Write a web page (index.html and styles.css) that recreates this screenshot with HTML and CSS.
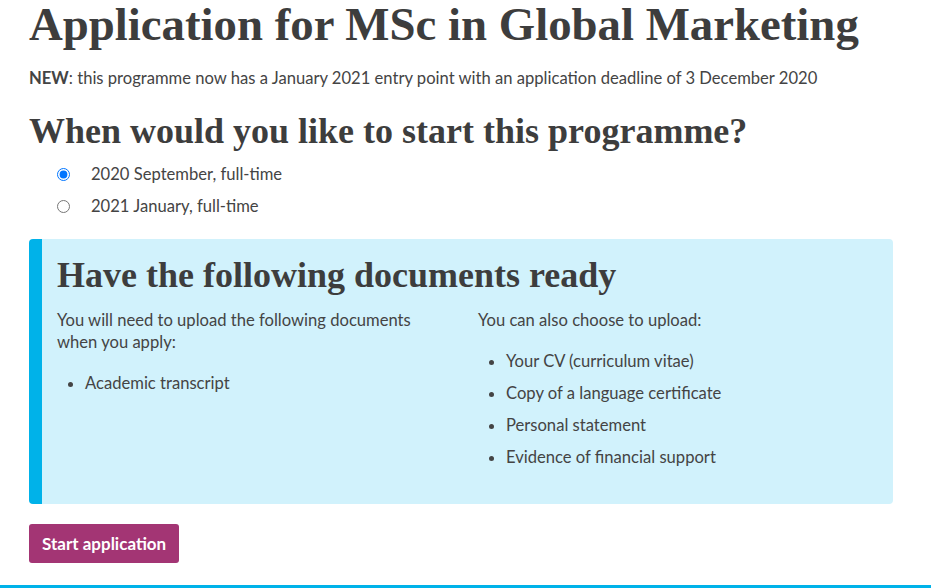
FILE: index.html
```html
<!DOCTYPE html>
<html lang="en">
<head>
    <meta charset="UTF-8">
    <meta name="viewport" content="width=device-width, initial-scale=1.0">
    <title>Application for MSc in Global Marketing</title>
    <link rel="stylesheet" href="styles.css">
</head>
<body>

    <div class="page">
        <h1 class="title">Application for MSc in Global Marketing</h1>
        <p class="notice"><strong>NEW</strong>: this programme now has a January 2021 entry point with an application deadline of 3 December 2020</p>

        <h2 class="question">When would you like to start this programme?</h2>
        <div class="choices">
            <label class="choice"><input type="radio" name="start" checked> <span>2020 September, full-time</span></label>
            <label class="choice"><input type="radio" name="start"> <span>2021 January, full-time</span></label>
        </div>

        <div class="docs">
            <h2 class="docs-title">Have the following documents ready</h2>
            <div class="docs-cols">
                <div class="docs-col">
                    <p>You will need to upload the following documents when you apply:</p>
                    <ul>
                        <li>Academic transcript</li>
                    </ul>
                </div>
                <div class="docs-col">
                    <p>You can also choose to upload:</p>
                    <ul>
                        <li>Your CV (curriculum vitae)</li>
                        <li>Copy of a language certificate</li>
                        <li>Personal statement</li>
                        <li>Evidence of financial support</li>
                    </ul>
                </div>
            </div>
        </div>

        <button class="start-btn">Start application</button>
    </div>
    <div class="footer-line"></div>

</body>
</html>
```

FILE: styles.css
```css
body {
    margin: 0;
    font-family: Lato, "Open Sans", sans-serif;
    font-size: 16.6px;
    color: #444;
    background: #fff;
    overflow: hidden;
}

.page {
    padding: 0 38px 0 29px;
    height: 585px;
    overflow: hidden;
}

.title {
    font-family: "Liberation Serif", serif;
    font-size: 46.8px;
    font-weight: bold;
    line-height: 48px;
    margin: 0;
    color: #3d3d3d;
}

.notice {
    margin: 19px 0 0;
    line-height: 22px;
}

.notice strong {
    font-weight: bold;
}

.question {
    font-family: "Liberation Serif", serif;
    font-size: 36px;
    font-weight: bold;
    line-height: 40px;
    margin: 22px 0 0;
    color: #3d3d3d;
}

.choices {
    margin-top: 7px;
    padding-left: 28px;
}

.choice {
    display: flex;
    align-items: center;
    height: 32px;
}

.choice input {
    margin: 0 21px 0 0;
    width: 13px;
    height: 13px;
}

.docs {
    margin-top: 17px;
    background-color: #d1f2fc;
    border-left: 13px solid #00b2e9;
    border-radius: 4px;
    padding: 13px 30px 26px 15px;
}

.docs-title {
    font-family: "Liberation Serif", serif;
    font-size: 36px;
    font-weight: bold;
    line-height: 46px;
    margin: 0;
    color: #3d3d3d;
}

.docs-cols {
    display: grid;
    grid-template-columns: 1fr 1fr;
    gap: 36px;
    margin-top: 11px;
}

.docs-col p {
    margin: 0;
    line-height: 22px;
}

.docs-col ul {
    margin: 19px 0 0;
    padding-left: 28px;
}

.docs-col li {
    line-height: 22px;
    margin-bottom: 10px;
}

.start-btn {
    margin-top: 20px;
    font-family: Lato, "Open Sans", sans-serif;
    font-size: 17px;
    font-weight: bold;
    color: #fff;
    background-color: #a33574;
    border: none;
    border-radius: 3px;
    padding: 0 13px;
    height: 39px;
}

.footer-line {
    height: 3px;
    background-color: #00b2e9;
}
```
